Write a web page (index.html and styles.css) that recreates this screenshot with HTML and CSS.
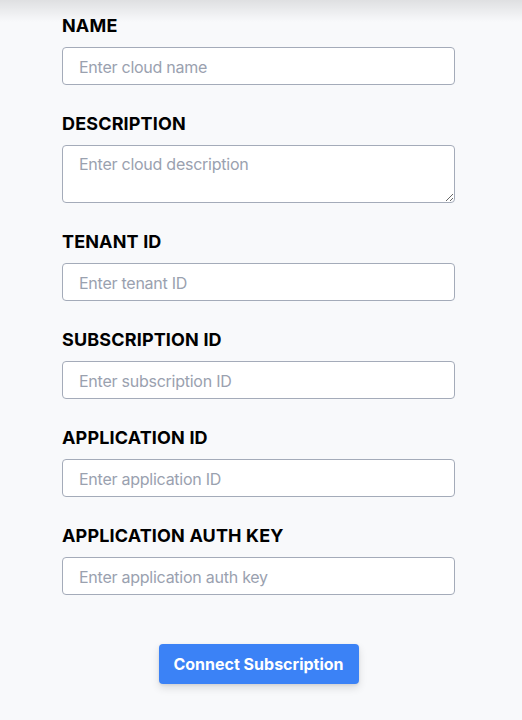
FILE: index.html
```html
<!DOCTYPE html>
<html>
<head>
<meta charset="utf-8">
<link rel="stylesheet" href="styles.css">
</head>
<body>
<div class="top-shade"></div>
<form class="form">
  <div class="field">
    <label class="label">NAME</label>
    <input class="input" type="text" placeholder="Enter cloud name">
  </div>
  <div class="field">
    <label class="label">DESCRIPTION</label>
    <textarea class="input textarea" placeholder="Enter cloud description"></textarea>
  </div>
  <div class="field">
    <label class="label">TENANT ID</label>
    <input class="input" type="text" placeholder="Enter tenant ID">
  </div>
  <div class="field">
    <label class="label">SUBSCRIPTION ID</label>
    <input class="input" type="text" placeholder="Enter subscription ID">
  </div>
  <div class="field">
    <label class="label">APPLICATION ID</label>
    <input class="input" type="text" placeholder="Enter application ID">
  </div>
  <div class="field">
    <label class="label">APPLICATION AUTH KEY</label>
    <input class="input" type="text" placeholder="Enter application auth key">
  </div>
  <div class="actions">
    <button class="button" type="button">Connect Subscription</button>
  </div>
</form>
</body>
</html>
```
FILE: styles.css
```css
* { box-sizing: border-box; }
html, body {
  margin: 0;
  padding: 0;
  background: #f8f9fb;
  font-family: Inter, "Liberation Sans", sans-serif;
}
body { position: relative; height: 720px; overflow: hidden; }
.top-shade {
  position: absolute;
  left: 0; right: 0; top: 0;
  height: 22px;
  background: linear-gradient(to bottom, rgba(0,0,0,0.10), rgba(0,0,0,0));
  pointer-events: none;
}
.form {
  width: 393px;
  margin: 0 0 0 62px;
  padding-top: 11px;
  display: flex;
  flex-direction: column;
  gap: 24px;
}
.field { display: flex; flex-direction: column; }
.label {
  font-size: 18px;
  line-height: 24px;
  padding-top: 3px;
  font-weight: 700;
  color: #000;
  margin-bottom: 9px;
  letter-spacing: 0.15px;
}
.input {
  width: 393px;
  height: 38px;
  border: 1px solid #a4abb9;
  border-radius: 4px;
  background: #fff;
  padding: 1px 16px 0;
  font-family: inherit;
  font-size: 16px;
  letter-spacing: -0.25px;
  color: #111;
  outline: none;
}
.input::placeholder { color: #9aa1af; }
.textarea {
  height: 58px;
  padding: 7px 16px;
  line-height: 22px;
  resize: vertical;
  display: block;
}
.actions {
  display: flex;
  justify-content: center;
  padding-top: 25px;
}
.button {
  width: 200px;
  height: 40px;
  border: none;
  border-radius: 4px;
  background: #3b82f6;
  color: #fff;
  font-family: inherit;
  font-size: 16px;
  font-weight: 700;
  box-shadow: 0 4px 8px rgba(0,0,0,0.12), 0 1px 3px rgba(0,0,0,0.08);
  cursor: pointer;
}
```
